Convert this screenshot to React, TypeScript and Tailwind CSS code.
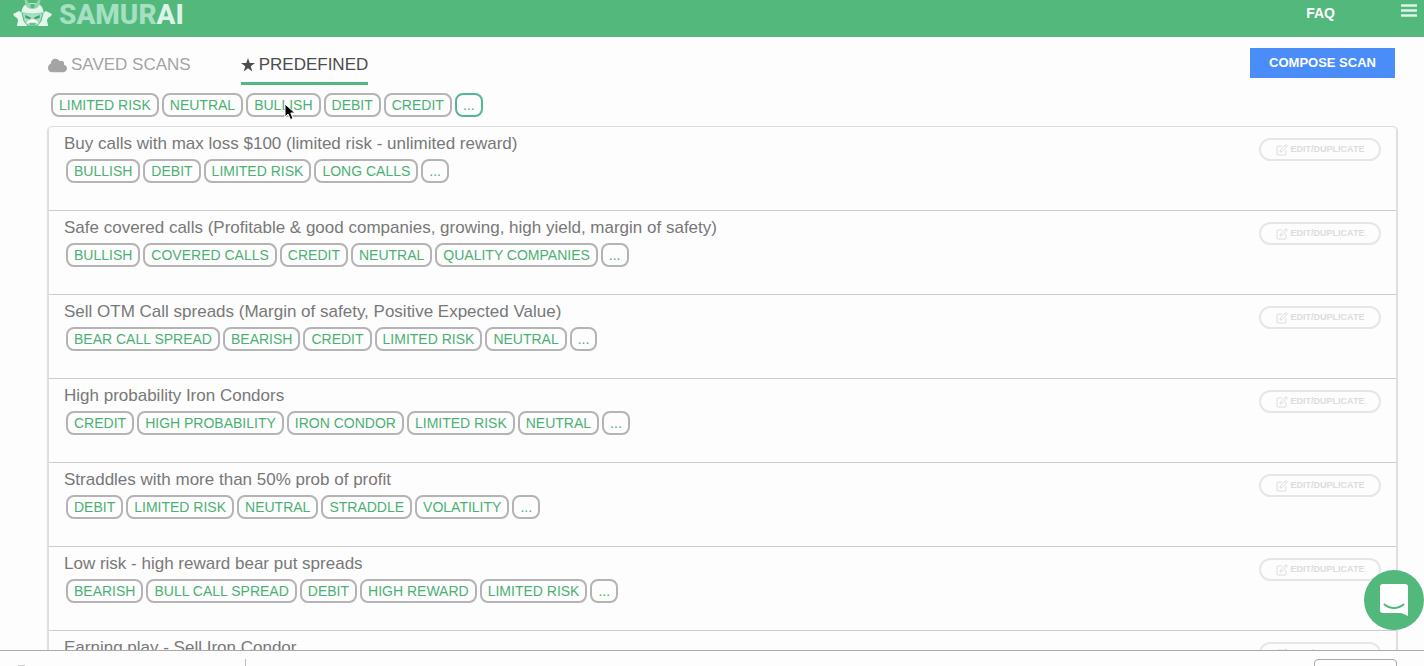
import { FaCloud } from 'react-icons/fa';
import { FiEdit } from 'react-icons/fi';

const filters = ['LIMITED RISK', 'NEUTRAL', 'BULLISH', 'DEBIT', 'CREDIT'];

const scans = [
  {
    title: 'Buy calls with max loss $100 (limited risk - unlimited reward)',
    tags: ['BULLISH', 'DEBIT', 'LIMITED RISK', 'LONG CALLS'],
  },
  {
    title:
      'Safe covered calls (Profitable & good companies, growing, high yield, margin of safety)',
    tags: ['BULLISH', 'COVERED CALLS', 'CREDIT', 'NEUTRAL', 'QUALITY COMPANIES'],
  },
  {
    title: 'Sell OTM Call spreads (Margin of safety, Positive Expected Value)',
    tags: ['BEAR CALL SPREAD', 'BEARISH', 'CREDIT', 'LIMITED RISK', 'NEUTRAL'],
  },
  {
    title: 'High probability Iron Condors',
    tags: ['CREDIT', 'HIGH PROBABILITY', 'IRON CONDOR', 'LIMITED RISK', 'NEUTRAL'],
  },
  {
    title: 'Straddles with more than 50% prob of profit',
    tags: ['DEBIT', 'LIMITED RISK', 'NEUTRAL', 'STRADDLE', 'VOLATILITY'],
  },
  {
    title: 'Low risk - high reward bear put spreads',
    tags: ['BEARISH', 'BULL CALL SPREAD', 'DEBIT', 'HIGH REWARD', 'LIMITED RISK'],
  },
  {
    title: 'Earning play - Sell Iron Condor',
    tags: [],
  },
];

function Tag({ label, active = false }: { label: string; active?: boolean }) {
  return (
    <button
      type="button"
      className={`h-6 rounded-lg border-2 px-1.5 text-sm leading-5 whitespace-nowrap text-[#4bb073] ${
        active ? 'border-[#53b88f]' : 'border-[#b4b4b4]'
      }`}
    >
      {label}
    </button>
  );
}

function SamuraiIcon() {
  return (
    <svg viewBox="0 0 40 27" className="h-[27px] w-10" aria-hidden="true">
      <path
        d="M0 14l6-3 3 2h21l3-2 6 3-1 2-3 2-1 2c0 2 1 4 1 6H4c0-2 1-4 1-6l-1-2-3-2z"
        fill="#e4f6ec"
      />
      <path d="M9 13h21l-2 8-4 5h-9l-4-5z" fill="#a6e0c3" stroke="#53b87b" />
      <path d="M8.500 13c0-6.500 4-10 11-10s11 3.500 11 10c-7 1.500-15 1.500-22 0z" fill="#e4f6ec" />
      <path
        d="M11.500 0c.5 6 3 9 8 9s7.500-3 8-9h-2.500c-1 3-3 4-5.500 4s-4.500-1-5.500-4z"
        fill="#8ed6b0"
      />
      <circle cx="19.500" cy="6" r="2.200" fill="#53b87b" />
      <path d="M9 12.500c7 2 14 2 21 0" fill="none" stroke="#8ed6b0" />
      <path d="M12 15l6 2.500-1 1.800-4.500-1.300zM27 15l-6 2.500 1 1.800 4.500-1.300z" fill="#3f9f66" />
      <path d="M13.500 24c.5-3 2.500-4.500 6-4.500s5.500 1.500 6 4.500l-3.500-1.500h-5z" fill="#fff" />
      <path d="M16.500 24h6" stroke="#53b87b" strokeWidth="1.500" />
    </svg>
  );
}

function StarIcon() {
  return (
    <svg viewBox="0 0 14 14" className="size-3.5" fill="currentColor" aria-hidden="true">
      <path d="M7 0l1.700 5.100H14l-4.300 3.200L11.300 13.500 7 10.300 2.700 13.500l1.600-5.200L0 5.100h5.300z" />
    </svg>
  );
}

function Header() {
  return (
    <header className="flex h-[37px] shrink-0 items-start justify-between bg-[#53b87b] pr-[7px] pl-[13px]">
      <a href="#home" className="flex items-start gap-1.5" aria-label="SAMURAI">
        <SamuraiIcon />
        <span className="font-[Roboto,sans-serif] text-[28px] leading-[30px] font-extrabold text-[#a6e0c3]">
          SAMUR<span className="text-[#dcf3e7]">AI</span>
        </span>
      </a>
      <nav className="flex items-start gap-[66px] text-white">
        <a href="#faq" className="pt-[3px] text-sm leading-5 font-bold">
          FAQ
        </a>
        <button type="button" aria-label="Menu" className="pt-1">
          <svg viewBox="0 0 16 13" className="h-[13px] w-4" aria-hidden="true">
            <path d="M0 1.500h16M0 6.500h16M0 11.500h16" stroke="#dcf3e7" strokeWidth="2.500" />
          </svg>
        </button>
      </nav>
    </header>
  );
}

function ChatButton() {
  return (
    <button
      type="button"
      aria-label="Open chat"
      className="fixed right-0 bottom-9 flex size-[60px] items-center justify-center rounded-full bg-[#53b87b]"
    >
      <svg viewBox="0 0 28 32" className="h-8 w-7" aria-hidden="true">
        <path d="M3 0h22a3 3 0 0 1 3 3v29c-3-1-5-3-8-3H3a3 3 0 0 1-3-3V3a3 3 0 0 1 3-3z" fill="#fff" />
        <path d="M4.500 20.500c5 4.500 14 4.500 19 0" fill="none" stroke="#53b87b" strokeWidth="2" strokeLinecap="round" />
      </svg>
    </button>
  );
}

export default function App() {
  return (
    <div className="flex h-screen flex-col overflow-hidden bg-[#fdfdfd] font-['Liberation_Sans',Arial,sans-serif]">
      <Header />

      <main className="flex min-h-0 grow flex-col overflow-hidden pr-[27px] pl-12">
        <div className="flex h-12 shrink-0 items-start justify-between pt-[11px] pr-0.5">
          <div className="flex gap-[50px] text-[17px] leading-[34px] font-medium">
            <button
              type="button"
              className="flex items-center gap-1 border-b-3 border-transparent text-[#a4a4a4]"
            >
              <FaCloud size={19} />
              SAVED SCANS
            </button>
            <button
              type="button"
              className="flex items-center gap-1 border-b-3 border-[#53b87b] text-[#4c4c4c]"
            >
              <StarIcon />
              PREDEFINED
            </button>
          </div>
          <button
            type="button"
            className="h-[30px] w-[145px] bg-[#4a8df8] text-[13px] font-bold text-white"
          >
            COMPOSE SCAN
          </button>
        </div>

        <div className="relative mt-2 flex shrink-0 gap-[3px] pl-[3px]">
          {filters.map((filter) => (
            <Tag key={filter} label={filter} />
          ))}
          <Tag label="..." active />
          <svg
            viewBox="0 0 12 18"
            className="absolute top-2.5 left-[236px] h-[18px] w-3"
            aria-hidden="true"
          >
            <path d="M1 1v13l3-3 2.500 5.500 2.500-1L6.800 10H11z" fill="#000" stroke="#fff" />
          </svg>
        </div>

        <ul className="mt-[9px] rounded-t border border-[#dddddd] shadow-[-1px_1px_1px_#dddddd,1px_1px_1px_#dddddd]">
          {scans.map((scan) => (
            <li
              key={scan.title}
              className="flex h-21 items-start justify-between border-b border-[#cccccc] px-[15px]"
            >
              <div className="pt-[7px]">
                <h3 className="text-[17px] leading-5 font-medium text-[#787878]">
                  {scan.title}
                </h3>
                <div className="mt-[5px] flex gap-[3px] pl-0.5">
                  {scan.tags.map((tag) => (
                    <Tag key={tag} label={tag} />
                  ))}
                  <Tag label="..." />
                </div>
              </div>
              <button
                type="button"
                className="mt-[11px] flex h-[23px] w-[122px] items-center justify-center gap-[3px] rounded-full border-2 border-[#e6e6e6] text-[9px] font-bold text-[#dcdcdc]"
              >
                <FiEdit size={12} />
                EDIT/DUPLICATE
              </button>
            </li>
          ))}
        </ul>
      </main>

      <footer className="flex h-4 shrink-0 items-start justify-between overflow-hidden border-t border-[#aaaaaa] pt-2 pr-[27px]">
        <div className="flex h-4 w-[246px] border-r border-[#bbbbbb] pt-1.5 pl-[18px]">
          <span className="h-2 w-[7px] bg-[#cccccc]" />
        </div>
        <div className="h-6 w-[83px] rounded-sm border border-[#aaaaaa]" />
      </footer>

      <ChatButton />
    </div>
  );
}
